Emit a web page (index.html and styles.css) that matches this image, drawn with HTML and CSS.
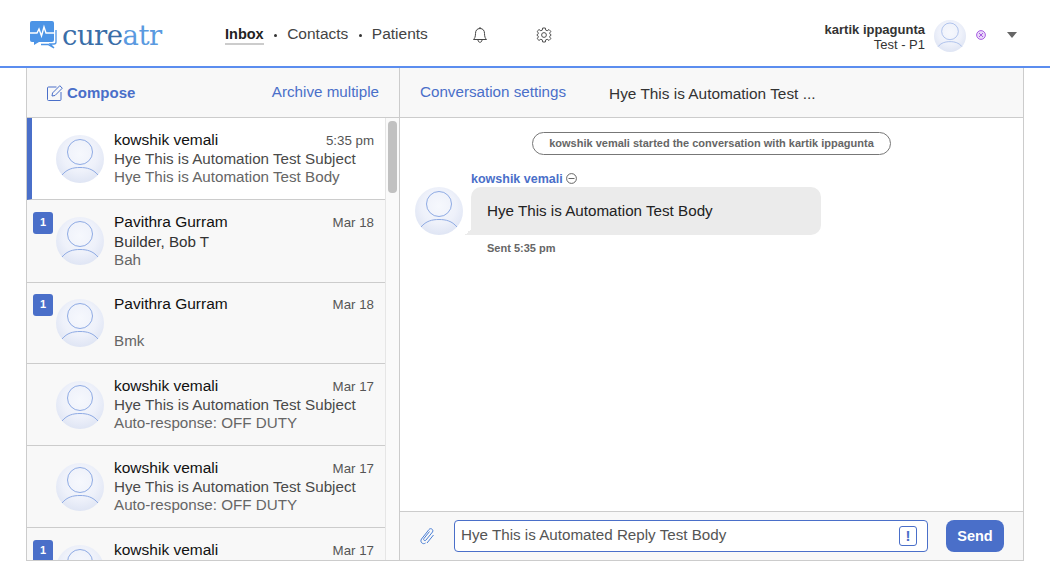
FILE: index.html
```html
<!DOCTYPE html>
<html lang="en">
<head>
  <meta charset="UTF-8" />
  <title>Cureatr Inbox</title>
  <link rel="stylesheet" href="styles.css">
</head>

<body>
  <svg class="sprite" width="0" height="0">
    <defs>
      <radialGradient id="av-bg" cx="50%" cy="40%" r="60%">
        <stop offset="0%" stop-color="#f6f8fd" />
        <stop offset="60%" stop-color="#eef1fa" />
        <stop offset="100%" stop-color="#dfe5f4" />
      </radialGradient>
      <symbol id="avatar" viewBox="0 0 48 48">
        <circle cx="24" cy="24" r="24" fill="url(#av-bg)" />
        <circle cx="24" cy="17" r="12.5" fill="none" stroke="#8fabe4" stroke-width="1" />
        <path d="M6 40 C11 34 17 32.5 24 32.5 C31 32.5 37 34 42 40" fill="none" stroke="#8fabe4" stroke-width="1" />
      </symbol>
    </defs>
  </svg>

  <header class="topbar">
    <div class="logo">
      <svg class="logo-icon" width="28" height="28" viewBox="0 0 28 28">
        <path d="M2 0 H22 a2 2 0 0 1 2 2 V19 a2 2 0 0 1 -2 2 H9 L4 24 V21 H2 a2 2 0 0 1 -2 -2 V2 a2 2 0 0 1 2 -2 Z" fill="#4c94e6" />
        <path d="M0 12 H7 L9 8 L11.500 15 L14 6 L16 12 H24" fill="none" stroke="#fff" stroke-width="1.400" />
        <path d="M26 9 V21 a2 2 0 0 1 -2 2 H20 L24 27 L18 23.500 H11" fill="none" stroke="#4c94e6" stroke-width="1.300" />
      </svg>
      <span class="logo-text">cure<span class="logo-light">atr</span></span>
    </div>

    <nav class="nav">
      <a class="nav-link active">Inbox</a>
      <span class="nav-dot"></span>
      <a class="nav-link">Contacts</a>
      <span class="nav-dot"></span>
      <a class="nav-link">Patients</a>
    </nav>

    <div class="top-icons">
      <svg width="16" height="18" viewBox="0 0 16 18" fill="none" stroke="#444" stroke-width="1">
        <path d="M8 1 V2.500 M8 2.500 C5 2.500 3.500 4.500 3.500 7.500 C3.500 11 2.500 12.500 1.500 13.500 H14.500 C13.500 12.500 12.500 11 12.500 7.500 C12.500 4.500 11 2.500 8 2.500 Z M6 14 C6 17 10 17 10 14" />
      </svg>
      <svg width="16" height="16" viewBox="0 0 24 24" fill="none" stroke="#444" stroke-width="1.400">
        <circle cx="12" cy="12" r="3.600" />
        <path d="M10 1.500 H14 L14.600 4.700 L16.800 5.600 L19.500 3.800 L22.200 6.500 L20.400 9.200 L21.300 11 L22.800 12 L21.300 13 L20.400 14.800 L22.200 17.500 L19.500 20.200 L16.800 18.400 L14.600 19.300 L14 22.500 H10 L9.400 19.300 L7.200 18.400 L4.500 20.200 L1.800 17.500 L3.600 14.800 L2.700 13 L1.200 12 L2.700 11 L3.600 9.200 L1.800 6.500 L4.500 3.800 L7.200 5.600 L9.400 4.700 Z" stroke-linejoin="round" />
      </svg>
    </div>

    <div class="user">
      <div class="user-text">
        <div class="user-name">kartik ippagunta</div>
        <div class="user-group">Test - P1</div>
      </div>
      <svg class="user-avatar" width="32" height="32"><use href="#avatar" /></svg>
      <svg class="user-status" width="10" height="10" viewBox="0 0 10 10" fill="#e9d8f8" stroke="#a14fe0" stroke-width="0.900">
        <circle cx="5" cy="5" r="4.400" />
        <path d="M3 3 L7 7 M7 3 L3 7" />
      </svg>
      <span class="user-caret"></span>
    </div>
  </header>

  <main class="app">
    <section class="list-pane">
      <div class="list-tools">
        <a class="compose">
          <svg width="16" height="16" viewBox="0 0 16 16" fill="none" stroke="#4a6fc9" stroke-width="1">
            <path d="M9.500 2 H1.500 a1 1 0 0 0 -1 1 V14.500 a1 1 0 0 0 1 1 H13 a1 1 0 0 0 1 -1 V7" />
            <path d="M5.500 8 L12.800 0.700 L15.300 3.200 L8 10.500 L5 11 Z" />
          </svg>
          Compose
        </a>
        <a class="tool-link">Archive multiple</a>
      </div>

      <div class="list-scroll">
        <div class="rows">
          <div class="row selected">
            <div class="badge-slot"></div>
            <svg class="row-avatar" width="48" height="48"><use href="#avatar" /></svg>
            <div class="row-text">
              <div class="row-top"><span class="row-name">kowshik vemali</span><span class="row-time">5:35 pm</span></div>
              <div class="row-subject">Hye This is Automation Test Subject</div>
              <div class="row-body">Hye This is Automation Test Body</div>
            </div>
          </div>

          <div class="row tall">
            <div class="badge-slot"><span class="badge">1</span></div>
            <svg class="row-avatar" width="48" height="48"><use href="#avatar" /></svg>
            <div class="row-text">
              <div class="row-top"><span class="row-name">Pavithra Gurram</span><span class="row-time">Mar 18</span></div>
              <div class="row-subject patient">Builder, Bob T</div>
              <div class="row-body">Bah</div>
            </div>
          </div>

          <div class="row short">
            <div class="badge-slot"><span class="badge">1</span></div>
            <svg class="row-avatar" width="48" height="48"><use href="#avatar" /></svg>
            <div class="row-text">
              <div class="row-top"><span class="row-name">Pavithra Gurram</span><span class="row-time">Mar 18</span></div>
              <div class="row-subject">&nbsp;</div>
              <div class="row-body">Bmk</div>
            </div>
          </div>

          <div class="row">
            <div class="badge-slot"></div>
            <svg class="row-avatar" width="48" height="48"><use href="#avatar" /></svg>
            <div class="row-text">
              <div class="row-top"><span class="row-name">kowshik vemali</span><span class="row-time">Mar 17</span></div>
              <div class="row-subject">Hye This is Automation Test Subject</div>
              <div class="row-body">Auto-response: OFF DUTY</div>
            </div>
          </div>

          <div class="row">
            <div class="badge-slot"></div>
            <svg class="row-avatar" width="48" height="48"><use href="#avatar" /></svg>
            <div class="row-text">
              <div class="row-top"><span class="row-name">kowshik vemali</span><span class="row-time">Mar 17</span></div>
              <div class="row-subject">Hye This is Automation Test Subject</div>
              <div class="row-body">Auto-response: OFF DUTY</div>
            </div>
          </div>

          <div class="row">
            <div class="badge-slot"><span class="badge">1</span></div>
            <svg class="row-avatar" width="48" height="48"><use href="#avatar" /></svg>
            <div class="row-text">
              <div class="row-top"><span class="row-name">kowshik vemali</span><span class="row-time">Mar 17</span></div>
              <div class="row-subject">Hye This is Automation Test Subject</div>
              <div class="row-body">Auto-response: OFF DUTY</div>
            </div>
          </div>
        </div>
        <div class="scrollbar"><div class="scroll-thumb"></div></div>
      </div>
    </section>

    <section class="chat-pane">
      <div class="chat-tools">
        <a class="tool-link">Conversation settings</a>
        <span class="chat-title">Hye This is Automation Test ...</span>
      </div>

      <div class="chat-body">
        <div class="started">kowshik vemali started the conversation with kartik ippagunta</div>
        <div class="msg">
          <svg class="msg-avatar" width="48" height="48"><use href="#avatar" /></svg>
          <div class="msg-main">
            <div class="msg-sender">
              kowshik vemali
              <svg width="11" height="11" viewBox="0 0 11 11" fill="none" stroke="#555" stroke-width="0.900">
                <circle cx="5.500" cy="5.500" r="4.900" />
                <path d="M2.500 5.500 H8.500" />
              </svg>
            </div>
            <div class="bubble">Hye This is Automation Test Body</div>
            <div class="msg-sent">Sent 5:35 pm</div>
          </div>
        </div>
      </div>

      <div class="reply">
        <svg class="clip" width="18" height="18" viewBox="0 0 18 18" fill="none" stroke="#4a7fd6" stroke-width="1">
          <path d="M6.500 16 C4 18 0.500 15 2.500 12 L10 2.500 C11.500 0.500 15 2.500 13.500 5 L7 13 C6 14.500 3.800 13 5 11.400 L10.500 4.500" />
          <path d="M8 16 L14.500 8" />
        </svg>
        <div class="reply-box">
          <span class="reply-text">Hye This is Automated Reply Test Body</span>
          <span class="urgent">!</span>
        </div>
        <button class="send">Send</button>
      </div>
    </section>
  </main>
</body>
</html>
```

FILE: styles.css
```css
html, body {
  height: 561px;
  margin: 0;
  overflow: hidden;
}

body {
  font-family: 'Liberation Sans', Arial, sans-serif;
  color: #333;
  background: #fff;
  display: flex;
  flex-direction: column;
}

.sprite {
  position: absolute;
}

/* top bar */
.topbar {
  height: 68px;
  flex: none;
  box-sizing: border-box;
  border-bottom: 2px solid #5b8def;
  display: flex;
  align-items: center;
  padding: 4px 0 0 30px;
}

.logo {
  display: flex;
  align-items: center;
  gap: 4px;
  width: 195px;
}

.logo-text {
  font-family: 'DejaVu Serif', serif;
  font-size: 27.500px;
  line-height: 30px;
  color: #3a6ea8;
  letter-spacing: -0.500px;
}

.logo-light {
  color: #5a9ae0;
}

.nav {
  display: flex;
  align-items: center;
  font-size: 15.500px;
  color: #444;
}

.nav-link {
  padding-bottom: 1px;
  border-bottom: 2px solid transparent;
}

.nav-link.active {
  font-size: 14.500px;
  font-weight: bold;
  color: #222;
  border-bottom-color: #ccc;
}

.nav-dot {
  width: 3px;
  height: 3px;
  border-radius: 50%;
  background: #333;
  margin: 0 10px 0 10.500px;
}

.top-icons {
  display: flex;
  align-items: center;
  gap: 48px;
  margin-left: 44px;
}

.user {
  margin-left: auto;
  display: flex;
  align-items: center;
  padding-right: 33px;
}

.user-text {
  text-align: right;
  font-size: 13px;
  line-height: 15px;
  margin-top: 3px;
}

.user-name {
  font-weight: bold;
}

.user-avatar {
  margin-left: 9px;
  margin-top: 2px;
}

.user-status {
  margin-left: 10px;
}

.user-caret {
  width: 0;
  height: 0;
  border-left: 5px solid transparent;
  border-right: 5px solid transparent;
  border-top: 6px solid #666;
  margin-left: 21px;
}

/* main panels */
.app {
  flex: 1;
  min-height: 0;
  margin: 0 26px;
  display: flex;
  border: 1px solid #ccc;
  border-top: none;
}

.list-pane {
  width: 372px;
  flex: none;
  border-right: 1px solid #ccc;
  display: flex;
  flex-direction: column;
  min-height: 0;
}

.list-tools {
  height: 50px;
  flex: none;
  box-sizing: border-box;
  background: #f8f8f8;
  border-bottom: 1px solid #ccc;
  display: flex;
  align-items: center;
  justify-content: space-between;
  padding: 0 20px;
}

.compose {
  display: flex;
  align-items: center;
  gap: 4px;
  font-size: 15px;
  font-weight: bold;
  color: #4a6fc9;
}

.tool-link {
  font-size: 15.200px;
  color: #4a6fc9;
  margin-top: -3px;
}

.list-scroll {
  flex: 1;
  min-height: 0;
  display: flex;
  overflow: hidden;
}

.rows {
  flex: 1;
  min-width: 0;
}

.row {
  height: 82px;
  box-sizing: border-box;
  display: flex;
  padding: 17px 11px 0 6px;
  background: #f8f8f8;
  border-bottom: 1px solid #ccc;
}

.row.selected {
  background: #fff;
  padding-left: 1px;
  border-left: 5px solid #4a6fc9;
}

.row.tall {
  height: 83px;
}

.row.short {
  height: 81px;
  padding-top: 16px;
}

.badge-slot {
  width: 23px;
  flex: none;
}

.badge {
  display: block;
  width: 20px;
  height: 22px;
  margin-top: -5px;
  border-radius: 3px;
  background: #4a6fc9;
  color: #fff;
  font-size: 11px;
  font-weight: bold;
  line-height: 20px;
  text-align: center;
}

.row-avatar {
  flex: none;
}

.row-text {
  flex: 1;
  min-width: 0;
  margin-left: 10px;
  margin-top: -4px;
}

.row-top {
  display: flex;
  justify-content: space-between;
  align-items: baseline;
  line-height: 18px;
}

.row-name {
  font-size: 15.500px;
  color: #111;
}

.row-time {
  font-size: 13.300px;
  color: #555;
}

.row-subject {
  font-size: 15.200px;
  line-height: 18px;
  color: #4a4a4a;
  white-space: nowrap;
}

.row-subject.patient {
  margin-top: 1px;
  color: #333;
}

.row-body {
  font-size: 15.200px;
  line-height: 18px;
  color: #666;
  white-space: nowrap;
}

.scrollbar {
  width: 14px;
  flex: none;
  border-left: 1px solid #e6e6e6;
  background: #fafafa;
  box-sizing: border-box;
  padding: 3px 2px 0 2px;
}

.scroll-thumb {
  height: 72px;
  background: #c1c1c1;
  border-radius: 4px;
}

/* conversation */
.chat-pane {
  flex: 1;
  min-width: 0;
  display: flex;
  flex-direction: column;
}

.chat-tools {
  height: 50px;
  flex: none;
  box-sizing: border-box;
  background: #f8f8f8;
  border-bottom: 1px solid #ccc;
  display: flex;
  align-items: center;
  gap: 43px;
  padding-left: 20px;
}

.chat-title {
  font-size: 15.400px;
  color: #333;
  margin-top: 3px;
}

.chat-body {
  flex: 1;
  min-height: 0;
  padding-top: 14px;
  display: flex;
  flex-direction: column;
}

.started {
  align-self: center;
  height: 23px;
  box-sizing: border-box;
  padding: 0 16px;
  border: 1px solid #777;
  border-radius: 12px;
  font-size: 11px;
  line-height: 21px;
  font-weight: bold;
  color: #666;
  white-space: nowrap;
}

.msg {
  display: flex;
  align-items: flex-start;
  margin-top: 15px;
  padding-left: 15px;
}

.msg-avatar {
  flex: none;
  margin-top: 17px;
}

.msg-main {
  margin-left: 8px;
}

.msg-sender {
  display: flex;
  align-items: center;
  gap: 3px;
  height: 17px;
  font-size: 12.500px;
  font-weight: bold;
  color: #4a6fc9;
}

.bubble {
  position: relative;
  width: 350px;
  height: 48px;
  box-sizing: border-box;
  padding-left: 16px;
  background: #ebebeb;
  border-radius: 10px 10px 10px 0;
  font-size: 15.200px;
  line-height: 48px;
  color: #222;
}

.bubble::before {
  content: "";
  position: absolute;
  left: -6px;
  bottom: 0;
  width: 6px;
  height: 6px;
  background: linear-gradient(to bottom right, transparent 50%, #ebebeb 50%);
}

.msg-sent {
  margin: 7px 0 0 16px;
  font-size: 11px;
  font-weight: bold;
  color: #666;
}

.reply {
  height: 49px;
  flex: none;
  box-sizing: border-box;
  background: #f8f8f8;
  border-top: 1px solid #ccc;
  display: flex;
  align-items: center;
  padding: 0 19px;
}

.clip {
  flex: none;
}

.reply-box {
  flex: 1;
  height: 32px;
  box-sizing: border-box;
  margin: 0 18px 0 17px;
  padding: 0 10px 0 6px;
  background: #fff;
  border: 1px solid #4a6fc9;
  border-radius: 4px;
  display: flex;
  align-items: center;
  justify-content: space-between;
}

.reply-text {
  font-size: 15.200px;
  line-height: 18px;
  color: #555;
  margin-top: -2px;
}

.urgent {
  width: 18px;
  height: 20px;
  box-sizing: border-box;
  border: 1px solid #4a6fc9;
  border-radius: 3px;
  color: #4a6fc9;
  font-size: 15px;
  font-weight: bold;
  line-height: 18px;
  text-align: center;
}

.send {
  width: 58px;
  height: 32px;
  border: none;
  border-radius: 8px;
  background: #4a6fc9;
  color: #fff;
  font-family: inherit;
  font-size: 14.500px;
  font-weight: bold;
}
```
